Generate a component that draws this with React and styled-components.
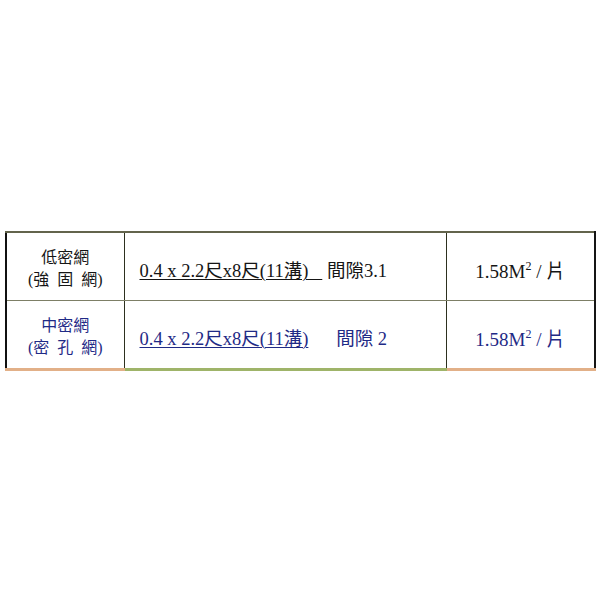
import React from "react";
import styled, { createGlobalStyle } from "styled-components";

const Global = createGlobalStyle`
  html, body { margin: 0; padding: 0; background: #ffffff; }
  body { font-family: "Liberation Serif", "Noto Sans CJK TC", serif; }
`;

const Page = styled.div`
  padding: 231px 0 0 5px;
  width: 600px;
  box-sizing: border-box;
`;

const Table = styled.table`
  width: 589px;
  border-collapse: collapse;
  table-layout: fixed;
  border-top: 2px solid #63644c;
  border-left: 2px solid #111111;
  border-right: 2px solid #151515;
`;

const Row = styled.tr`
  height: ${(p) => p.$h}px;
  color: ${(p) => p.$color};
`;

const Cell = styled.td`
  box-sizing: border-box;
  width: ${(p) => p.$w}px;
  padding: ${(p) => p.$pad || "5px 0 0 0"};
  text-align: ${(p) => p.$align || "center"};
  vertical-align: middle;
  border-right: ${(p) => (p.$last ? "none" : "1.5px solid #2d301f")};
  border-bottom: ${(p) => p.$bottom};
  white-space: pre;
`;

const Name = styled.div`
  font-family: "Liberation Serif", "Noto Sans CJK TC", serif;
  font-size: 16px;
  line-height: 22px;
`;

const Spec = styled.span`
  font-family: "Liberation Serif", "Noto Sans CJK TC", serif;
  font-size: 18.5px;
  text-decoration: underline;
  text-underline-offset: 2px;
  text-decoration-thickness: 1px;
  color: inherit;
`;

const Gap = styled.span`
  font-family: "Liberation Serif", "Noto Sans CJK TC", serif;
  font-size: 18.5px;
`;

const Area = styled.span`
  font-family: "Liberation Serif", "Noto Sans CJK TC", serif;
  font-size: 19px;
  sup {
    font-size: 12px;
    vertical-align: 8px;
    line-height: 0;
  }
`;

const rowDivider = "1px solid #7d7f66";

export default function App() {
  return (
    <Page>
      <Global />
      <Table>
        <tbody>
          <Row $h={68} $color="#151515">
            <Cell $w={118} $bottom={rowDivider}>
              <Name>低密網</Name>
              <Name>{"(強  固  網)"}</Name>
            </Cell>
            <Cell $w={322} $align="left" $pad="6px 0 0 15px" $bottom={rowDivider}>
              <Spec>{"0.4 x 2.2尺x8尺(11溝)   "}</Spec>
              <Gap>{" 間隙3.1"}</Gap>
            </Cell>
            <Cell $w={149} $last $pad="6px 0 0 0" $bottom={rowDivider}>
              <Area>
                1.58M<sup>2</sup> / 片
              </Area>
            </Cell>
          </Row>
          <Row $h={69} $color="#1f2a86">
            <Cell $w={118} $bottom="3px solid #e2b088">
              <Name>中密網</Name>
              <Name>{"(密  孔  網)"}</Name>
            </Cell>
            <Cell $w={322} $align="left" $pad="6px 0 0 15px" $bottom="3px solid #9fb469">
              <Spec as="a" href="#">{"0.4 x 2.2尺x8尺(11溝)"}</Spec>
              <Gap>{"      間隙 2"}</Gap>
            </Cell>
            <Cell $w={149} $last $pad="6px 0 0 0" $bottom="3px solid #e2b088">
              <Area>
                1.58M<sup>2</sup> / 片
              </Area>
            </Cell>
          </Row>
        </tbody>
      </Table>
    </Page>
  );
}
